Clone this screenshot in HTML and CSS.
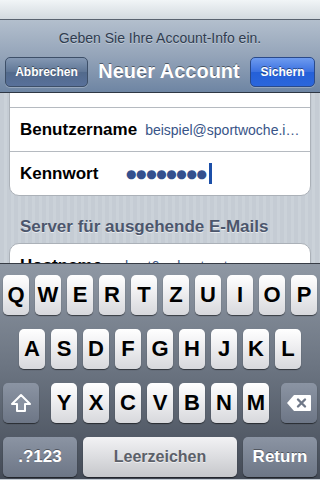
FILE: index.html
```html
<!DOCTYPE html>
<html lang="de">
<head>
<meta charset="utf-8">
<title>Neuer Account</title>
<link rel="stylesheet" href="styles.css">
</head>
<body>
<div class="screen">
  <div class="topstrip"></div>
  <header class="navbar">
    <div class="prompt">Geben Sie Ihre Account-Info ein.</div>
    <div class="navrow">
      <button class="navbtn cancel">Abbrechen</button>
      <div class="title">Neuer Account</div>
      <button class="navbtn save">Sichern</button>
    </div>
  </header>
  <main class="content">
    <div class="card first">
      <div class="row"></div>
      <div class="row"><span class="label">Benutzername</span><span class="value ellip">beispiel@sportwoche.info</span></div>
      <div class="row"><span class="label">Kennwort</span><span class="value dots">●●●●●●●●</span><span class="caret"></span></div>
    </div>
    <div class="section">Server für ausgehende E-Mails</div>
    <div class="card">
      <div class="row"><span class="label">Hostname</span><span class="value">host6.ssl-net.net</span></div>
    </div>
  </main>
  <section class="keyboard">
    <div class="krow">
      <span class="key">Q</span><span class="key">W</span><span class="key">E</span><span class="key">R</span><span class="key">T</span><span class="key">Z</span><span class="key">U</span><span class="key">I</span><span class="key">O</span><span class="key">P</span>
    </div>
    <div class="krow">
      <span class="key">A</span><span class="key">S</span><span class="key">D</span><span class="key">F</span><span class="key">G</span><span class="key">H</span><span class="key">J</span><span class="key">K</span><span class="key">L</span>
    </div>
    <div class="krow spread">
      <span class="key fn wide">
        <svg width="22" height="20" viewBox="0 0 22 20"><path d="M11 2 L20 11 L15 11 L15 18 L7 18 L7 11 L2 11 Z" fill="#8a93a2" stroke="#ffffff" stroke-width="2" stroke-linejoin="round"/></svg>
      </span>
      <div class="letters">
        <span class="key">Y</span><span class="key">X</span><span class="key">C</span><span class="key">V</span><span class="key">B</span><span class="key">N</span><span class="key">M</span>
      </div>
      <span class="key fn wide">
        <svg width="26" height="18" viewBox="0 0 26 18"><path d="M8 1 L24 1 Q25 1 25 2 L25 16 Q25 17 24 17 L8 17 L1 9 Z" fill="#ffffff"/><path d="M12 5.5 L19 12.5 M19 5.5 L12 12.5" stroke="#6f7888" stroke-width="2.4" stroke-linecap="round"/></svg>
      </span>
    </div>
    <div class="krow bottom">
      <span class="key fn big">.?123</span>
      <span class="key space">Leerzeichen</span>
      <span class="key fn big">Return</span>
    </div>
  </section>
</div>
</body>
</html>
```

FILE: styles.css
```css
* { box-sizing: border-box; }
html, body { margin: 0; padding: 0; }
body {
  font-family: "Liberation Sans", Arial, sans-serif;
  width: 320px;
  height: 480px;
  overflow: hidden;
  background: #c5ccd4;
}
.screen { width: 320px; height: 480px; display: flex; flex-direction: column; overflow: hidden; }

.topstrip {
  height: 20px;
  flex: none;
  background: linear-gradient(#f1f5f7, #d3dadf);
  border-bottom: 1px solid #59636f;
}

.navbar {
  height: 73px;
  flex: none;
  background: linear-gradient(#b3bfcd 0%, #94a4b9 50%, #6e85a3 100%);
  border-bottom: 1px solid #2e3744;
}
.prompt {
  height: 36px;
  line-height: 36px;
  text-align: center;
  font-size: 14px;
  color: #2f3c50;
  text-shadow: 0 1px 0 rgba(255,255,255,0.35);
}
.navrow {
  height: 36px;
  display: flex;
  align-items: flex-start;
  padding: 1px 5px 0 5px;
}
.navbtn {
  flex: none;
  font-family: "Liberation Sans", Arial, sans-serif;
  font-weight: bold;
  font-size: 12px;
  color: #fff;
  height: 30px;
  border-radius: 5px;
  padding: 0;
  text-shadow: 0 -1px 0 rgba(0,0,0,0.45);
}
.cancel {
  width: 83px;
  border: 1px solid #3d4f68;
  background: linear-gradient(#8498b3, #5f7696 50%, #526a8c 51%, #58709a);
  box-shadow: 0 1px 0 rgba(255,255,255,0.25);
}
.save {
  width: 65px;
  border: 1px solid #2a4a8a;
  background: linear-gradient(#6e9bef, #3a70e0 50%, #2560d8 51%, #2b66dc);
  box-shadow: 0 1px 0 rgba(255,255,255,0.25);
}
.title {
  flex: 1;
  text-align: center;
  font-weight: bold;
  font-size: 20px;
  color: #fff;
  line-height: 28px;
  white-space: nowrap;
  text-shadow: 0 -1px 0 rgba(0,0,0,0.45);
}

.content {
  height: 170px;
  flex: none;
  overflow: hidden;
  background: repeating-linear-gradient(90deg, #c5ccd4 0 4px, #cbd2d9 4px 7px);
  padding: 0 9px;
}
.card {
  background: #fff;
  border: 1px solid #abb1b8;
  border-radius: 10px;
}
.card.first { margin-top: -30px; }
.row {
  height: 44px;
  display: flex;
  align-items: center;
  padding: 0 9px 0 10px;
  border-bottom: 1px solid #b5bac0;
}
.row:last-child { border-bottom: none; height: 43px; }
.label {
  font-weight: bold;
  font-size: 17px;
  color: #000;
  min-width: 97px;
  margin-right: 8px;
  white-space: nowrap;
}
.value {
  font-size: 14px;
  color: #385487;
  white-space: nowrap;
}
.ellip { overflow: hidden; text-overflow: ellipsis; min-width: 0; flex: 1; }
.dots {
  font-family: "DejaVu Sans", sans-serif;
  font-size: 12px;
  letter-spacing: -0.4px;
  color: #34508e;
  margin-left: 1px;
}
.caret {
  display: inline-block;
  width: 3px;
  height: 21px;
  background: #1c4fa8;
  margin-left: 2px;
}
.section {
  margin: 21px 0 0 11px;
  height: 26px;
  font-weight: bold;
  font-size: 17px;
  color: #4c566c;
  text-shadow: 0 1px 0 rgba(255,255,255,0.6);
}

.keyboard {
  height: 216px;
  flex: none;
  border-top: 1px solid #373c45;
  background: linear-gradient(#8f98a4, #6a7380 50%, #444b57);
  padding: 11px 3px 2px 3px;
  display: flex;
  flex-direction: column;
  gap: 14px;
}
.krow {
  height: 40px;
  display: flex;
  justify-content: center;
  gap: 6px;
}
.krow.spread { justify-content: space-between; }
.letters { display: flex; gap: 6px; }
.key {
  width: 26px;
  height: 40px;
  border-radius: 5px;
  background: linear-gradient(#ffffff, #f0f0f2 40%, #d7d8dc);
  box-shadow: 0 1px 1px rgba(0,0,0,0.55);
  display: flex;
  align-items: center;
  justify-content: center;
  font-weight: bold;
  font-size: 22px;
  color: #000;
}
.key.fn {
  background: linear-gradient(#8b94a3, #6d7686);
  color: #fff;
  text-shadow: 0 -1px 0 rgba(0,0,0,0.4);
}
.key.wide { width: 36px; }
.key.big { width: 74px; font-size: 17px; }
.key.space {
  width: 154px;
  font-size: 16px;
  color: #5b6069;
  background: linear-gradient(#f2f2f4, #dcdde0 50%, #c6c7cb);
  text-shadow: 0 1px 0 rgba(255,255,255,0.6);
}
```
